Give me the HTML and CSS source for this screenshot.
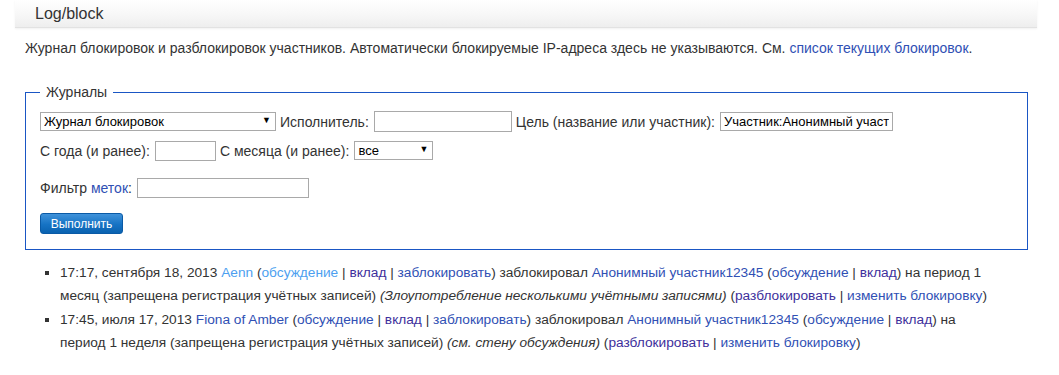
FILE: index.html
```html
<!DOCTYPE html>
<html lang="ru">
<head>
  <meta charset="UTF-8">
  <title>Log/block</title>
  <link rel="stylesheet" href="styles.css">
</head>
<body>
  <header class="title-bar">
    <h1>Log/block</h1>
  </header>

  <main class="content">
    <p class="intro">Журнал блокировок и разблокировок участников. Автоматически блокируемые IP-адреса здесь не указываются. См. <a href="#">список текущих блокировок</a>.</p>

    <form class="log-form">
      <fieldset>
        <legend>Журналы</legend>
        <div class="row">
          <span class="select wide">
            <select>
              <option>Журнал блокировок</option>
            </select>
          </span>
          <label for="performer">Исполнитель:</label>
          <input id="performer" class="field performer" type="text">
          <label for="target">Цель (название или участник):</label>
          <input id="target" class="field target" type="text" value="Участник:Анонимный участник12345">
        </div>
        <div class="row">
          <label for="year">С года (и ранее):</label>
          <input id="year" class="field year" type="text">
          <label for="month">С месяца (и ранее):</label>
          <span class="select narrow">
            <select id="month">
              <option>все</option>
            </select>
          </span>
        </div>
        <div class="row tags">
          <label for="tag">Фильтр <a href="#">меток</a>:</label>
          <input id="tag" class="field tag" type="text">
        </div>
        <div class="row submit">
          <button type="button" class="btn">Выполнить</button>
        </div>
      </fieldset>
    </form>

    <ul class="log">
      <li>17:17, сентября 18, 2013 <a href="#" class="new">Aenn</a> (<a href="#" class="new">обсуждение</a> | <a href="#" class="visited">вклад</a> | <a href="#">заблокировать</a>) заблокировал <a href="#">Анонимный участник12345</a> (<a href="#">обсуждение</a> | <a href="#" class="visited">вклад</a>) на период 1 месяц (запрещена регистрация учётных записей) <em>(Злоупотребление несколькими учётными записями)</em> (<a href="#" class="visited">разблокировать</a> | <a href="#">изменить блокировку</a>)</li>
      <li>17:45, июля 17, 2013 <a href="#">Fiona of Amber</a> (<a href="#">обсуждение</a> | <a href="#" class="visited">вклад</a> | <a href="#">заблокировать</a>) заблокировал <a href="#">Анонимный участник12345</a> (<a href="#">обсуждение</a> | <a href="#" class="visited">вклад</a>) на период 1 неделя (запрещена регистрация учётных записей) <em>(см. стену обсуждения)</em> (<a href="#" class="visited">разблокировать</a> | <a href="#">изменить блокировку</a>)</li>
    </ul>
  </main>
</body>
</html>
```

FILE: styles.css
```css
:root {
  --text: #333333;
  --link: #3050b4;
  --visited: #3d2f9c;
  --new: #4d9ff0;
  --frame: #1a56c4;
}

* {
  box-sizing: border-box;
}

body {
  margin: 0;
  font-family: 'Liberation Sans', Arial, sans-serif;
  font-size: 14px;
  color: var(--text);
  background: #fff;
}

a {
  color: var(--link);
  text-decoration: none;
}

a.visited {
  color: var(--visited);
}

a.new {
  color: var(--new);
}

.title-bar {
  margin: 0 22px 0 15px;
  height: 28px;
  padding: 0 20px;
  display: flex;
  align-items: center;
  background: linear-gradient(to bottom, #ffffff 0%, #f6f6f6 60%, #eeeeee 100%);
  border-bottom: 1px solid #e2e2e2;
  box-shadow: 0 1px 2px rgba(0, 0, 0, 0.06);
}

.title-bar h1 {
  margin: 0;
  font-size: 16px;
  font-weight: normal;
  color: #333;
}

.content {
  padding: 0 31px 0 25px;
}

.intro {
  margin: 11px 0 0;
  line-height: 18px;
}

.log-form {
  margin-top: 27px;
}

fieldset {
  margin: 0;
  padding: 11px 14px 15px;
  border: 1px solid var(--frame);
}

legend {
  padding: 0 6px;
  line-height: 16px;
  color: var(--text);
}

.row {
  display: flex;
  align-items: center;
  gap: 4px;
  height: 21px;
  margin-bottom: 8px;
}

.row.tags {
  margin-top: 16px;
  margin-bottom: 15px;
}

.row.submit {
  margin-bottom: 0;
}

.row label {
  margin-right: 1px;
}

.field {
  height: 20px;
  padding: 1px 3px;
  border: 1px solid #a9a9a9;
  font-family: inherit;
  font-size: 13px;
  color: #000;
  background: #fff;
}

.field.performer {
  width: 138px;
  height: 21px;
}

.field.target {
  width: 173px;
  height: 19px;
}

.field.year {
  width: 61px;
}

.field.tag {
  width: 172px;
}

.select {
  position: relative;
  display: inline-block;
}

.select select {
  appearance: none;
  -webkit-appearance: none;
  height: 19px;
  padding: 0 3px;
  border: 1px solid #a9a9a9;
  border-radius: 0;
  background: #fff;
  font-family: inherit;
  font-size: 13px;
  color: #000;
}

.select::after {
  content: '\25BC';
  position: absolute;
  right: 5px;
  top: 3px;
  font-size: 9px;
  color: #000;
  pointer-events: none;
}

.select.wide select {
  width: 236px;
}

.select.narrow select {
  width: 79px;
}

.btn {
  width: 83px;
  height: 21px;
  padding: 0;
  border: 1px solid #0a5aa6;
  border-radius: 3px;
  background: linear-gradient(to bottom, #3f92da 0%, #1673c4 55%, #0a62b0 100%);
  color: #fff;
  font-family: inherit;
  font-size: 12px;
}

.log {
  margin: 12px 0 0;
  padding-left: 35px;
  padding-right: 34px;
  list-style: square;
  font-size: 13.7px;
}

.log li {
  line-height: 22.5px;
  margin-bottom: 2px;
}

.log em {
  color: var(--text);
}
```
